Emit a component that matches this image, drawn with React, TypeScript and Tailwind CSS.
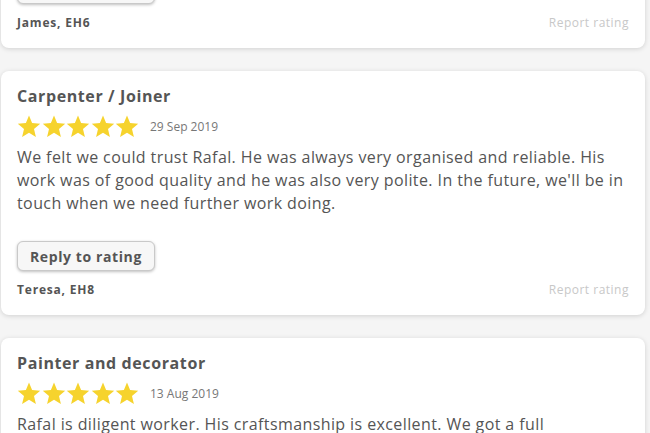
import React from "react";

type Review = {
  title: string;
  date: string;
  text: string;
  author: string;
};

const Star = () => (
  <svg width="24" height="23" viewBox="0 0 24 23" className="shrink-0">
    <path
      d="M12 0.6 L15.1 8 L23.2 8.7 L17 14 L18.9 22 L12 17.8 L5.1 22 L7 14 L0.8 8.7 L8.9 8 Z"
      fill="#f6d32d"
    />
  </svg>
);

const Stars = () => (
  <div className="flex gap-[0.5px]">
    {[0, 1, 2, 3, 4].map((i) => (
      <Star key={i} />
    ))}
  </div>
);

const ReplyButton = () => (
  <button className="h-[30px] px-3 rounded-md border border-[#c9c9c9] bg-[#f7f7f7] shadow-[0_1px_3px_rgba(0,0,0,0.25)] text-[14px] font-bold tracking-[0.6px] text-[#555]">
    Reply to rating
  </button>
);

const Footer = ({ author }: { author: string }) => (
  <div className="flex justify-between items-center mt-[10px] text-[12px]">
    <span className="font-bold tracking-[0.8px] text-[#555]">{author}</span>
    <span className="tracking-[0.5px] text-[#c8c8c8]">Report rating</span>
  </div>
);

const ReviewCard = ({ review }: { review: Review }) => (
  <div className="bg-white rounded-lg shadow-[0_1px_5px_rgba(0,0,0,0.15)] px-4 pt-[13px] pb-[16px]">
    <h3 className="text-[16px] font-bold tracking-[0.6px] text-[#555] leading-6">{review.title}</h3>
    <div className="flex items-center gap-[11px] mt-[7px]">
      <Stars />
      <span className="text-[12px] text-[#777]">{review.date}</span>
    </div>
    <p className="text-[16px] tracking-[0.4px] text-[#555] leading-[23px] mt-[8px]">{review.text}</p>
    <div className="mt-[26px]">
      <ReplyButton />
    </div>
    <Footer author={review.author} />
  </div>
);

const reviews: Review[] = [
  {
    title: "Carpenter / Joiner",
    date: "29 Sep 2019",
    text: "We felt we could trust Rafal. He was always very organised and reliable. His work was of good quality and he was also very polite. In the future, we'll be in touch when we need further work doing.",
    author: "Teresa, EH8",
  },
  {
    title: "Painter and decorator",
    date: "13 Aug 2019",
    text: "Rafal is diligent worker. His craftsmanship is excellent. We got a full redecoration of the living room and hallway and we are really happy with the result.",
    author: "Mark, EH7",
  },
];

export default function App() {
  return (
    <div className="h-[433px] overflow-hidden bg-[#f5f5f5] font-['Open_Sans',sans-serif]">
      <div className="pl-px pr-[5px] flex flex-col gap-[23px] -mt-[26px]">
        {/* tail of the previous card */}
        <div className="bg-white rounded-lg shadow-[0_1px_5px_rgba(0,0,0,0.15)] px-4 pb-[16px]">
          <ReplyButton />
          <Footer author="James, EH6" />
        </div>
        {reviews.map((r) => (
          <ReviewCard key={r.title} review={r} />
        ))}
      </div>
    </div>
  );
}
